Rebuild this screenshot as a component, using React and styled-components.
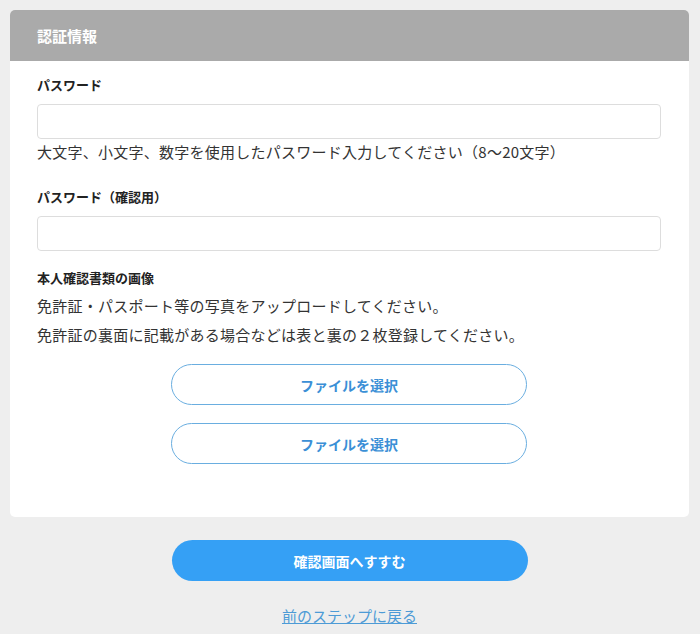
import React from "react";
import styled, { createGlobalStyle } from "styled-components";

const Global = createGlobalStyle`
	body {
		margin: 0;
		background-color: #eeeeee;
		font-family: "Noto Sans CJK JP", "Noto Sans", sans-serif;
		color: #333333;
	}
`

const Page = styled.div`
	padding: 10px 11px 0 10px;
	display: flex;
	flex-direction: column;
	align-items: center;
`

const Card = styled.section`
	width: 100%;
	background-color: #ffffff;
	border-radius: 5px;
	overflow: hidden;
`

const Header = styled.h2`
	margin: 0;
	height: 51px;
	display: flex;
	align-items: center;
	padding-left: 27px;
	background-color: #aaaaaa;
	color: #ffffff;
	font-size: 15px;
	font-weight: 700;
`

const Body = styled.div`
	padding: 14px 28px 53px 27px;
	display: flex;
	flex-direction: column;
`

const Label = styled.label`
	display: block;
	font-size: 13px;
	line-height: 20px;
	font-weight: 700;
	color: #222222;
	margin-top: ${(p) => p.$gap || 0}px;
`

const Input = styled.input`
	box-sizing: border-box;
	height: 35px;
	width: 100%;
	margin-top: 9px;
	border: 1px solid #dddddd;
	border-radius: 4px;
	background: #ffffff;
	outline: none;
`

const Hint = styled.p`
	margin: 2px 0 0;
	font-size: 15px;
	line-height: 22px;
	letter-spacing: 0.25px;
	color: #333333;
`

const Note = styled.p`
	margin: 3px 0 0;
	font-size: 15px;
	line-height: 29px;
	letter-spacing: 0.25px;
	color: #333333;
`

const Buttons = styled.div`
	display: flex;
	flex-direction: column;
	align-items: center;
	gap: 18px;
	margin-top: 15px;
`

const FileButton = styled.button`
	box-sizing: border-box;
	width: 356px;
	height: 41px;
	border: 1px solid #6aaee0;
	border-radius: 21px;
	background: #ffffff;
	color: #3b8fd6;
	font-family: inherit;
	font-size: 14px;
	font-weight: 700;
`

const Submit = styled.button`
	margin-top: 23px;
	width: 356px;
	height: 41px;
	border: none;
	border-radius: 21px;
	background-color: #35a0f5;
	color: #ffffff;
	font-family: inherit;
	font-size: 14px;
	font-weight: 700;
`

const Back = styled.a`
	margin-top: 24px;
	font-size: 15px;
	line-height: 22px;
	color: #4d9bd6;
	text-decoration: underline;
`

function App(){
	return(
		<Page>
			<Global />
			<Card>
				<Header>認証情報</Header>
				<Body>
					<Label>パスワード</Label>
					<Input type="password" />
					<Hint>大文字、小文字、数字を使用したパスワード入力してください（8〜20文字）</Hint>

					<Label $gap={24}>パスワード（確認用）</Label>
					<Input type="password" />

					<Label $gap={17}>本人確認書類の画像</Label>
					<Note>
						免許証・パスポート等の写真をアップロードしてください。<br />
						免許証の裏面に記載がある場合などは表と裏の２枚登録してください。
					</Note>

					<Buttons>
						<FileButton>ファイルを選択</FileButton>
						<FileButton>ファイルを選択</FileButton>
					</Buttons>
				</Body>
			</Card>

			<Submit>確認画面へすすむ</Submit>
			<Back href="#">前のステップに戻る</Back>
		</Page>
	);
}
export default App;
